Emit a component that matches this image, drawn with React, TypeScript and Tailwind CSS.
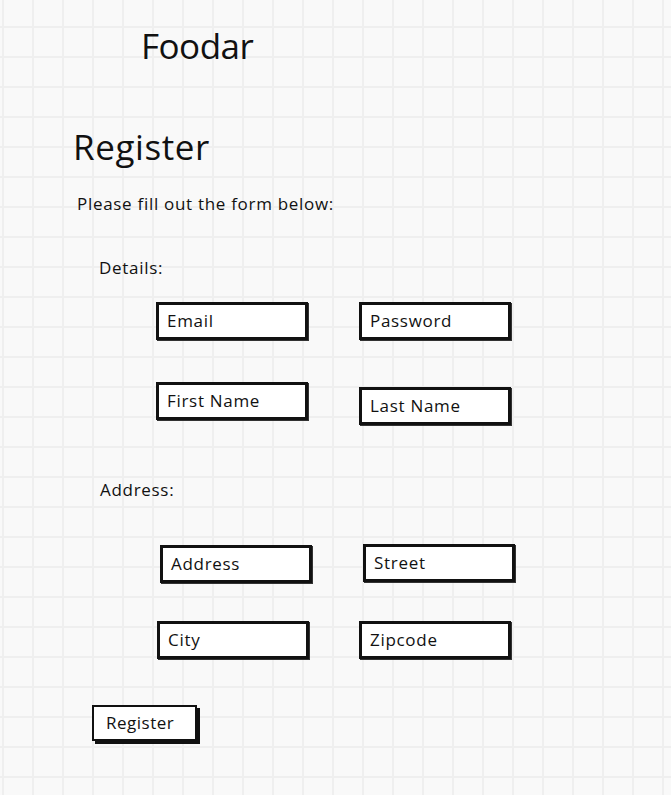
type FieldProps = {
  label: string;
  className?: string;
};

function Field({ label, className = '' }: FieldProps) {
  return (
    <div
      className={`flex h-[38px] w-[152px] shrink-0 items-center border-[3px] border-[#111] bg-white pl-[8px] text-[17px] tracking-[0.7px] text-[#111] shadow-[1px_1px_0_#333] ${className}`}
    >
      {label}
    </div>
  );
}

export default function App() {
  return (
    <div className="h-[795px] w-full overflow-hidden bg-[#f9f9f9] bg-[linear-gradient(to_right,#efefef_2px,transparent_2px),linear-gradient(to_bottom,#efefef_2px,transparent_2px)] bg-[length:30px_30px] bg-[position:2px_26px] font-['Open_Sans','Lato',sans-serif] text-[#111]">
      <div className="flex flex-col items-start">
        <div className="ml-[141px] mt-[25px] text-[35px] leading-[42px] tracking-[-0.5px]">Foodar</div>

        <h1 className="ml-[73px] mt-[59px] text-[35px] leading-[42px] tracking-[0.6px]">Register</h1>
        <p className="ml-[77px] mt-[24px] text-[17px] leading-[24px] tracking-[0.7px]">Please fill out the form below:</p>

        {/* details */}
        <p className="ml-[99px] mt-[40px] text-[17px] leading-[24px] tracking-[0.7px]">Details:</p>
        <div className="mt-[22px] flex items-start">
          <Field label="Email" className="ml-[156px]" />
          <Field label="Password" className="ml-[51px]" />
        </div>
        <div className="mt-[42px] flex items-start">
          <Field label="First Name" className="ml-[156px]" />
          <Field label="Last Name" className="ml-[51px] mt-[5px]" />
        </div>

        {/* address */}
        <p className="ml-[100px] mt-[53px] text-[17px] leading-[24px] tracking-[0.7px]">Address:</p>
        <div className="mt-[42px] flex items-start">
          <Field label="Address" className="ml-[160px] mt-[1px]" />
          <Field label="Street" className="ml-[51px]" />
        </div>
        <div className="mt-[38px] flex items-start">
          <Field label="City" className="ml-[157px]" />
          <Field label="Zipcode" className="ml-[50px]" />
        </div>

        <button className="ml-[92px] mt-[46px] h-[36px] w-[105px] border-2 border-[#111] bg-white pl-[12px] text-left text-[17px] tracking-[0.5px] text-[#111] shadow-[3px_3px_0_#111]">
          Register
        </button>
      </div>
    </div>
  );
}
